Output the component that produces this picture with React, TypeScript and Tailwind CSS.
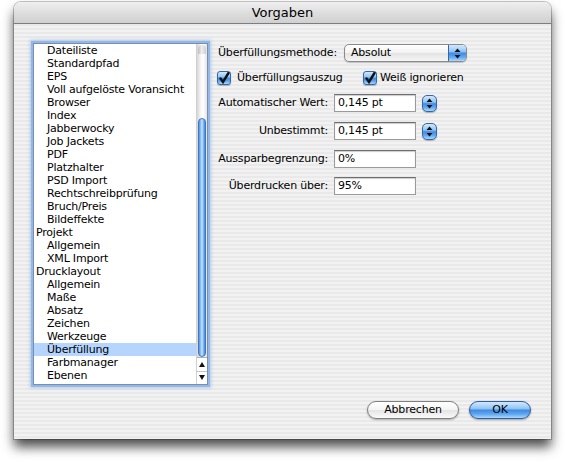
import React from "react";

const blue =
  "bg-[linear-gradient(180deg,#d2e8fc_0%,#95c6f4_40%,#3f8ce4_52%,#5ea6f0_75%,#a9d8fc_100%)]";

type Item = { label: string; sub?: boolean; selected?: boolean };

const items: Item[] = [
  { label: "Dateiliste", sub: true },
  { label: "Standardpfad", sub: true },
  { label: "EPS", sub: true },
  { label: "Voll aufgelöste Voransicht", sub: true },
  { label: "Browser", sub: true },
  { label: "Index", sub: true },
  { label: "Jabberwocky", sub: true },
  { label: "Job Jackets", sub: true },
  { label: "PDF", sub: true },
  { label: "Platzhalter", sub: true },
  { label: "PSD Import", sub: true },
  { label: "Rechtschreibprüfung", sub: true },
  { label: "Bruch/Preis", sub: true },
  { label: "Bildeffekte", sub: true },
  { label: "Projekt" },
  { label: "Allgemein", sub: true },
  { label: "XML Import", sub: true },
  { label: "Drucklayout" },
  { label: "Allgemein", sub: true },
  { label: "Maße", sub: true },
  { label: "Absatz", sub: true },
  { label: "Zeichen", sub: true },
  { label: "Werkzeuge", sub: true },
  { label: "Überfüllung", sub: true, selected: true },
  { label: "Farbmanager", sub: true },
  { label: "Ebenen", sub: true },
];

function UpDown({ className = "" }: { className?: string }) {
  return (
    <svg width="7" height="11" viewBox="0 0 7 11" className={className}>
      <path d="M3.5 0.5 L6.5 4 L0.5 4 Z" fill="#111" />
      <path d="M3.5 10.5 L6.5 7 L0.5 7 Z" fill="#111" />
    </svg>
  );
}

function Stepper() {
  return (
    <div
      className={`w-[15px] h-[17px] rounded-[5px] border border-[#3566a8] ${blue} flex items-center justify-center shadow-[0_1px_1px_rgba(0,0,0,0.25)]`}
    >
      <UpDown />
    </div>
  );
}

function Check() {
  return (
    <div
      className={`w-[14px] h-[14px] rounded-[3px] border border-[#3566a8] ${blue} flex items-center justify-center shadow-[0_1px_1px_rgba(0,0,0,0.25)]`}
    >
      <svg width="12" height="12" viewBox="0 0 12 12">
        <path d="M2.5 6.5 L5 10 L10.5 1" stroke="#111" strokeWidth="2.4" fill="none" strokeLinecap="round" />
      </svg>
    </div>
  );
}

function Field({ label, value, stepper }: { label: string; value: string; stepper?: boolean }) {
  return (
    <div className="flex items-center h-[18px]">
      <div className="w-[111px] text-right">{label}</div>
      <div className="ml-[6px] w-[82px] h-[18px] bg-white border border-[#9a9a9a] border-t-[#6e6e6e] shadow-[inset_0_1px_1px_rgba(0,0,0,0.2)] pl-[3px] leading-[16px]">
        {value}
      </div>
      {stepper && (
        <div className="ml-[6px]">
          <Stepper />
        </div>
      )}
    </div>
  );
}

export default function App() {
  return (
    <div className="w-[565px] h-[463px] bg-white overflow-hidden pl-[14px] pt-[2px] font-['DejaVu_Sans',sans-serif] text-[11px] tracking-[-0.2px] text-black">
      <div className="w-[537px] h-[437px] rounded-t-[7px] flex flex-col bg-[repeating-linear-gradient(180deg,#f2f2f2_0px,#f2f2f2_2px,#e9e9e9_2px,#e9e9e9_4px)] shadow-[0_0_0_1px_rgba(0,0,0,0.22),0_8px_12px_rgba(0,0,0,0.7)]">
        {/* title bar */}
        <div className="h-[22px] rounded-t-[7px] border-b border-[#7d7d7d] bg-[linear-gradient(180deg,#efefef_0%,#dedede_50%,#d0d0d0_100%)] flex items-center justify-center text-[13px] tracking-normal">
          Vorgaben
        </div>

        {/* body */}
        <div className="flex-1 flex pt-[19px] pl-[19px] pr-[20px] pb-[20px]">
          {/* list */}
          <div className="w-[175px] h-[342px] bg-white border border-[#7a8fb0] shadow-[0_0_0_2px_#92b8e8,0_0_3px_3px_rgba(120,165,225,0.5)] flex">
            <div className="flex-1 flex flex-col">
              {items.map((it, i) => (
                <div
                  key={i}
                  className={`h-[13px] leading-[14px] whitespace-nowrap ${it.sub ? "pl-[13px]" : "pl-[2px]"} ${it.selected ? "bg-[#b5d5ff]" : ""}`}
                >
                  {it.label}
                </div>
              ))}
            </div>
            {/* scrollbar */}
            <div className="w-[11px] flex flex-col border-l border-[#d0d0d0] bg-[linear-gradient(90deg,#d6d6d6_0%,#f4f4f4_35%,#ffffff_60%,#e4e4e4_100%)]">
              <div className="h-[74px] pt-[1px]">
                <div className="h-[9px] mx-[1px] rounded-t-full bg-[linear-gradient(90deg,#bcbcbc,#eeeeee_45%,#cfcfcf)]" />
              </div>
              <div className="flex-1 mx-[1px] rounded-full border border-[#3f76c2] bg-[linear-gradient(90deg,#4f93e2_0%,#9fcdf8_35%,#c9e4fc_50%,#7bb6f1_75%,#3d86dd_100%)]" />
              <div className="h-[27px] flex flex-col border-t border-[#b0b0b0] bg-white">
                <div className="flex-1 flex items-center justify-center border-b border-[#c6c6c6]">
                  <svg width="6" height="5" viewBox="0 0 6 5">
                    <path d="M3 0 L6 5 L0 5 Z" fill="#111" />
                  </svg>
                </div>
                <div className="flex-1 flex items-center justify-center">
                  <svg width="6" height="5" viewBox="0 0 6 5">
                    <path d="M0 0 L6 0 L3 5 Z" fill="#111" />
                  </svg>
                </div>
              </div>
            </div>
          </div>

          {/* right panel */}
          <div className="flex-1 flex flex-col pl-[9px] pt-[1px]">
            <div className="flex items-center h-[18px]">
              <div className="w-[127px] pl-[1px]">Überfüllungsmethode:</div>
              <div className="w-[123px] h-[18px] flex rounded-[5px] border border-[#8a8a8a] bg-[linear-gradient(180deg,#ffffff_0%,#f2f2f2_50%,#e2e2e2_51%,#f6f6f6_100%)] shadow-[0_1px_1px_rgba(0,0,0,0.2)] overflow-hidden">
                <div className="flex-1 pl-[6px] leading-[16px]">Absolut</div>
                <div className={`w-[18px] ${blue} border-l border-[#3566a8] flex items-center justify-center`}>
                  <UpDown />
                </div>
              </div>
            </div>

            <div className="flex items-center h-[14px] mt-[9px]">
              <div className="w-[146px] flex items-center">
                <Check />
                <span className="ml-[6px]">Überfüllungsauszug</span>
              </div>
              <Check />
              <span className="ml-[3px]">Weiß ignorieren</span>
            </div>

            <div className="mt-[9px]">
              <Field label="Automatischer Wert:" value="0,145 pt" stepper />
            </div>
            <div className="mt-[10px]">
              <Field label="Unbestimmt:" value="0,145 pt" stepper />
            </div>
            <div className="mt-[10px]">
              <Field label="Aussparbegrenzung:" value="0%" />
            </div>
            <div className="mt-[9px]">
              <Field label="Überdrucken über:" value="95%" />
            </div>

            <div className="mt-auto flex justify-end gap-[10px]">
              <button className="w-[92px] h-[18px] rounded-full border border-[#7f7f7f] bg-[linear-gradient(180deg,#ffffff_0%,#f4f4f4_50%,#e4e4e4_51%,#fafafa_100%)] shadow-[0_1px_2px_rgba(0,0,0,0.3)] leading-[16px] text-[11px]">
                Abbrechen
              </button>
              <button className={`w-[62px] h-[18px] rounded-full border border-[#2c5fa8] ${blue} shadow-[0_1px_2px_rgba(0,0,0,0.35)] leading-[16px] text-[11px]`}>
                OK
              </button>
            </div>
          </div>
        </div>
      </div>
    </div>
  );
}
